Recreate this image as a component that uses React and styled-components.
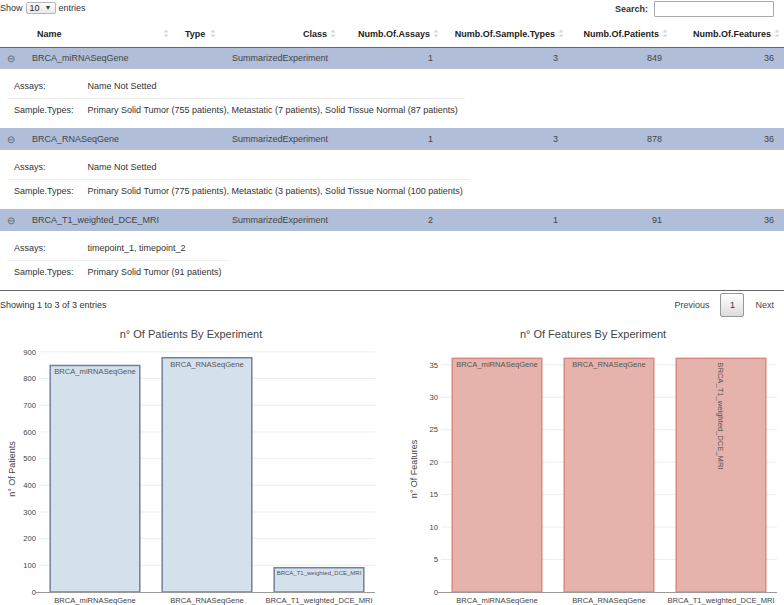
import React from 'react';
import styled, { createGlobalStyle } from 'styled-components';

const GlobalStyle = createGlobalStyle`
  html, body { margin: 0; padding: 0; background: #fff; }
  body {
    font-family: "Liberation Sans", Arial, sans-serif;
    font-size: 9px;
    color: #333;
  }
  * { box-sizing: border-box; }
`;

const Page = styled.div`
  width: 784px;
  height: 605px;
  overflow: hidden;
`;

const TopBar = styled.div`
  display: flex;
  justify-content: space-between;
  align-items: flex-start;
  height: 21px;
`;

const LengthControl = styled.div`
  display: flex;
  align-items: center;
  gap: 3px;
  height: 15px;
  color: #333;
`;

const FakeSelect = styled.span`
  display: inline-flex;
  align-items: center;
  justify-content: space-between;
  width: 30px;
  height: 12px;
  padding: 0 3px 0 3px;
  border: 1px solid #b5b5b5;
  border-radius: 2px;
  background: linear-gradient(#fdfdfd, #e9e9e9);
  color: #222;
  font-size: 9px;
`;

const Caret = styled.span`
  font-size: 7px;
  color: #444;
`;

const SearchControl = styled.div`
  display: flex;
  align-items: center;
  gap: 6px;
  padding-top: 1px;
  padding-right: 10px;
  font-weight: bold;
  color: #333;
`;

const SearchInput = styled.input`
  width: 120px;
  height: 16px;
  border: 1px solid #aaa;
  border-radius: 1px;
  padding: 0 3px;
  font-family: inherit;
  font-size: 9px;
`;

const Table = styled.table`
  width: 100%;
  border-collapse: collapse;
  table-layout: fixed;
  border-bottom: 1px solid #666;
`;

const Th = styled.th`
  height: 26px;
  padding: 0 ${p => (p.$right ? 13 : 10)}px 0 ${p => p.$pl ?? 10}px;
  font-weight: bold;
  color: #222;
  border-bottom: 1px solid #666;
  white-space: nowrap;
  vertical-align: middle;
`;

const HeadInner = styled.div`
  display: flex;
  align-items: center;
  justify-content: ${p => (p.$right ? 'flex-end' : 'space-between')};
`;

const SortIcon = styled.svg`
  flex: none;
  width: 6px;
  height: 9px;
  margin-left: 3px;
  margin-right: ${p => (p.$right ? -9 : -4)}px;
`;

const MainRow = styled.tr`
  background: #b0bed9;
`;

const ToggleCell = styled.td`
  height: 22px;
  padding: 0;
  text-align: center;
  color: #666;
  font-size: 10px;
`;

const Td = styled.td`
  height: 22px;
  padding: 0 10px;
  text-align: ${p => (p.$right ? 'right' : 'left')};
  color: #444;
  white-space: nowrap;
  overflow: hidden;
`;

const DetailCell = styled.td`
  padding: 6px 7px 7px;
`;

const DetailTable = styled.table`
  border-collapse: collapse;
`;

const DetailRowEl = styled.tr`
  border-bottom: ${p => (p.$sep ? '1px solid #ececec' : 'none')};
`;

const DetailTd = styled.td`
  height: 23px;
  padding: 0 7px;
  color: #333;
  white-space: nowrap;
`;

const Footer = styled.div`
  display: flex;
  justify-content: space-between;
  align-items: center;
  height: 29px;
  padding: 2px 0 3px;
  color: #333;
`;

const Paginate = styled.div`
  display: flex;
  align-items: center;
  gap: 11px;
  padding-right: 10px;
  color: #444;
`;

const PageButton = styled.span`
  display: inline-flex;
  align-items: center;
  justify-content: center;
  width: 24px;
  height: 24px;
  border: 1px solid #979797;
  border-radius: 2px;
  background: linear-gradient(to bottom, #fff 0%, #dcdcdc 100%);
  color: #333;
`;

const ChartsRow = styled.div`
  display: grid;
  grid-template-columns: 382px 382px;
  column-gap: 20px;
`;

const ChartSvg = styled.svg`
  display: block;
  font-family: "Liberation Sans", Arial, sans-serif;
`;

const columns = [
  { key: 'toggle', width: 22 },
  { key: 'Name', width: 153, pl: 15 },
  { key: 'Type', width: 47 },
  { key: 'Class', width: 118, right: true },
  { key: 'Numb.Of.Assays', width: 103, right: true },
  { key: 'Numb.Of.Sample.Types', width: 125, right: true },
  { key: 'Numb.Of.Patients', width: 104, right: true },
  { key: 'Numb.Of.Features', width: 112, right: true },
];

const rows = [
  {
    name: 'BRCA_miRNASeqGene',
    cls: 'SummarizedExperiment',
    assays: 1,
    samples: 3,
    patients: 849,
    features: 36,
    assayNames: 'Name Not Setted',
    sampleTypes:
      'Primary Solid Tumor (755 patients), Metastatic (7 patients), Solid Tissue Normal (87 patients)',
  },
  {
    name: 'BRCA_RNASeqGene',
    cls: 'SummarizedExperiment',
    assays: 1,
    samples: 3,
    patients: 878,
    features: 36,
    assayNames: 'Name Not Setted',
    sampleTypes:
      'Primary Solid Tumor (775 patients), Metastatic (3 patients), Solid Tissue Normal (100 patients)',
  },
  {
    name: 'BRCA_T1_weighted_DCE_MRI',
    cls: 'SummarizedExperiment',
    assays: 2,
    samples: 1,
    patients: 91,
    features: 36,
    assayNames: 'timepoint_1, timepoint_2',
    sampleTypes: 'Primary Solid Tumor (91 patients)',
  },
];

function Sort({ right }) {
  return (
    <SortIcon $right={right} viewBox="0 0 6 9">
      <polygon points="0.5,3.6 3,0.6 5.5,3.6" fill="#d8d8d8" />
      <polygon points="0.5,5.4 3,8.4 5.5,5.4" fill="#d8d8d8" />
    </SortIcon>
  );
}

function BarChart({ title, yTitle, data, range, ticks, fill, stroke }) {
  const W = 382;
  const H = 285;
  const x0 = 39;
  const x1 = 375;
  const y0 = 26;
  const y1 = 272;
  const band = (x1 - x0) / data.length;
  const bw = band * 0.8;
  const sy = v => y1 - (v * (y1 - y0)) / range;
  return (
    <ChartSvg width={W} height={H} viewBox={`0 0 ${W} ${H}`}>
      <text x={W / 2} y={18} textAnchor="middle" fontSize="11" fill="#444">
        {title}
      </text>
      {ticks
        .filter(t => t > 0)
        .map(t => (
          <line key={t} x1={x0} x2={x1} y1={sy(t)} y2={sy(t)} stroke="#eeeeee" strokeWidth="1" />
        ))}
      {ticks.map(t => (
        <text key={`l${t}`} x={36} y={sy(t) + 2.7} textAnchor="end" fontSize="7.6" fill="#444">
          {t}
        </text>
      ))}
      {data.map((d, i) => {
        const cx = x0 + band * i + band / 2;
        const top = sy(d.value);
        return (
          <g key={d.label}>
            <rect
              x={cx - bw / 2}
              y={top}
              width={bw}
              height={y1 - top}
              fill={fill}
              stroke={stroke}
              strokeWidth="1.5"
            />
            {d.rotate ? (
              <text
                transform={`translate(${cx - 2.6} ${top + 4}) rotate(90)`}
                fontSize="7.6"
                fill="#555"
              >
                {d.label}
              </text>
            ) : (
              <text
                x={cx}
                y={top + (d.small ? 7.6 : 9)}
                textAnchor="middle"
                fontSize={d.small ? 6 : 7.6}
                fill="#555"
              >
                {d.label}
              </text>
            )}
            <text x={cx} y={283} textAnchor="middle" fontSize="7.6" fill="#444">
              {d.label}
            </text>
          </g>
        );
      })}
      <line x1={35} x2={x1} y1={y1 + 0.5} y2={y1 + 0.5} stroke="#999" strokeWidth="1" />
      <text
        transform={`translate(14.5 ${(y0 + y1) / 2}) rotate(-90)`}
        textAnchor="middle"
        fontSize="9"
        fill="#444"
      >
        {yTitle}
      </text>
    </ChartSvg>
  );
}

export default function App() {
  return (
    <Page>
      <GlobalStyle />
      <TopBar>
        <LengthControl>
          Show
          <FakeSelect>
            10 <Caret>▼</Caret>
          </FakeSelect>
          entries
        </LengthControl>
        <SearchControl>
          Search:
          <SearchInput type="search" />
        </SearchControl>
      </TopBar>

      <Table>
        <colgroup>
          {columns.map(c => (
            <col key={c.key} style={{ width: c.width }} />
          ))}
        </colgroup>
        <thead>
          <tr>
            {columns.map(c =>
              c.key === 'toggle' ? (
                <Th key={c.key} />
              ) : (
                <Th key={c.key} $right={c.right} $pl={c.pl}>
                  <HeadInner $right={c.right}>
                    <span>{c.key}</span>
                    <Sort right={c.right} />
                  </HeadInner>
                </Th>
              )
            )}
          </tr>
        </thead>
        <tbody>
          {rows.map(r => (
            <React.Fragment key={r.name}>
              <MainRow>
                <ToggleCell>⊖</ToggleCell>
                <Td>{r.name}</Td>
                <Td />
                <Td>{r.cls}</Td>
                <Td $right>{r.assays}</Td>
                <Td $right>{r.samples}</Td>
                <Td $right>{r.patients}</Td>
                <Td $right>{r.features}</Td>
              </MainRow>
              <tr>
                <DetailCell colSpan={8}>
                  <DetailTable>
                    <tbody>
                      <DetailRowEl $sep>
                        <DetailTd>Assays:</DetailTd>
                        <DetailTd>{r.assayNames}</DetailTd>
                      </DetailRowEl>
                      <DetailRowEl>
                        <DetailTd>Sample.Types:</DetailTd>
                        <DetailTd>{r.sampleTypes}</DetailTd>
                      </DetailRowEl>
                    </tbody>
                  </DetailTable>
                </DetailCell>
              </tr>
            </React.Fragment>
          ))}
        </tbody>
      </Table>

      <Footer>
        <span>Showing 1 to 3 of 3 entries</span>
        <Paginate>
          <span>Previous</span>
          <PageButton>1</PageButton>
          <span>Next</span>
        </Paginate>
      </Footer>

      <ChartsRow>
        <BarChart
          title="n° Of Patients By Experiment"
          yTitle="n° Of Patients"
          range={922}
          ticks={[0, 100, 200, 300, 400, 500, 600, 700, 800, 900]}
          fill="#d4e1ed"
          stroke="#7081a0"
          data={[
            { label: 'BRCA_miRNASeqGene', value: 849 },
            { label: 'BRCA_RNASeqGene', value: 878 },
            { label: 'BRCA_T1_weighted_DCE_MRI', value: 91, small: true },
          ]}
        />
        <BarChart
          title="n° Of Features By Experiment"
          yTitle="n° Of Features"
          range={37.9}
          ticks={[0, 5, 10, 15, 20, 25, 30, 35]}
          fill="#e5b3ab"
          stroke="#d98a80"
          data={[
            { label: 'BRCA_miRNASeqGene', value: 36 },
            { label: 'BRCA_RNASeqGene', value: 36 },
            { label: 'BRCA_T1_weighted_DCE_MRI', value: 36, rotate: true },
          ]}
        />
      </ChartsRow>
    </Page>
  );
}
